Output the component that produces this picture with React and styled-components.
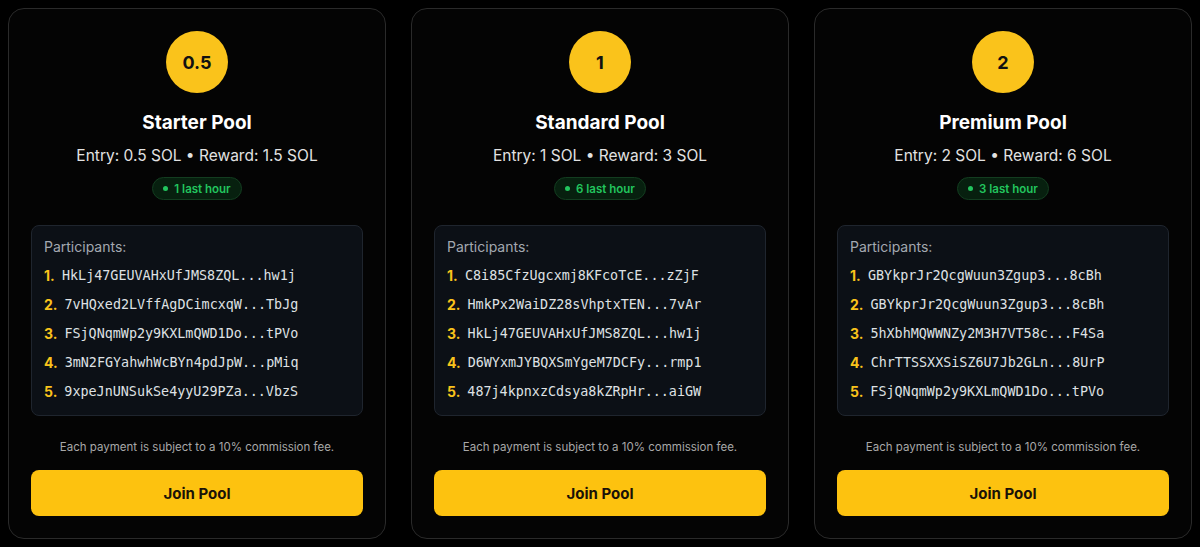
import React from "react";
import styled, { createGlobalStyle } from "styled-components";

const pools = [
  {
    amount: "0.5",
    name: "Starter Pool",
    entry: "0.5",
    reward: "1.5",
    recent: 1,
    participants: [
      "HkLj47GEUVAHxUfJMS8ZQL...hw1j",
      "7vHQxed2LVffAgDCimcxqW...TbJg",
      "FSjQNqmWp2y9KXLmQWD1Do...tPVo",
      "3mN2FGYahwhWcBYn4pdJpW...pMiq",
      "9xpeJnUNSukSe4yyU29PZa...VbzS",
    ],
  },
  {
    amount: "1",
    name: "Standard Pool",
    entry: "1",
    reward: "3",
    recent: 6,
    participants: [
      "C8i85CfzUgcxmj8KFcoTcE...zZjF",
      "HmkPx2WaiDZ28sVhptxTEN...7vAr",
      "HkLj47GEUVAHxUfJMS8ZQL...hw1j",
      "D6WYxmJYBQXSmYgeM7DCFy...rmp1",
      "487j4kpnxzCdsya8kZRpHr...aiGW",
    ],
  },
  {
    amount: "2",
    name: "Premium Pool",
    entry: "2",
    reward: "6",
    recent: 3,
    participants: [
      "GBYkprJr2QcgWuun3Zgup3...8cBh",
      "GBYkprJr2QcgWuun3Zgup3...8cBh",
      "5hXbhMQWWNZy2M3H7VT58c...F4Sa",
      "ChrTTSSXXSiSZ6U7Jb2GLn...8UrP",
      "FSjQNqmWp2y9KXLmQWD1Do...tPVo",
    ],
  },
];

const GlobalStyle = createGlobalStyle`
  body {
    margin: 0;
    background: #000;
    font-family: Inter, "Noto Sans", sans-serif;
    -webkit-font-smoothing: antialiased;
  }
`;

const Grid = styled.div`
  display: grid;
  grid-template-columns: repeat(3, 1fr);
  gap: 25px;
  padding: 8px;
`;

const Card = styled.div`
  display: flex;
  flex-direction: column;
  align-items: center;
  padding: 22px;
  background: #040404;
  border: 1px solid #2a2a2a;
  border-radius: 16px;
`;

const Coin = styled.div`
  width: 62px;
  height: 62px;
  border-radius: 50%;
  background: #fac31b;
  color: #111;
  display: flex;
  align-items: center;
  justify-content: center;
  font-size: 18px;
  font-weight: 700;
`;

const Title = styled.h3`
  margin: 16px 0 0;
  font-size: 19px;
  line-height: 28px;
  font-weight: 700;
  color: #fff;
`;

const Terms = styled.p`
  margin: 7px 0 0;
  font-size: 15.5px;
  line-height: 24px;
  color: #e2e2e2;
`;

const Badge = styled.span`
  margin-top: 9px;
  display: inline-flex;
  align-items: center;
  gap: 6px;
  height: 23px;
  padding: 0 10px;
  border-radius: 999px;
  background: #07200f;
  border: 1px solid #133d20;
  color: #22c55e;
  font-size: 11.5px;
  font-weight: 600;
  box-sizing: border-box;
`;

const Dot = styled.span`
  width: 5px;
  height: 5px;
  border-radius: 50%;
  background: #22c55e;
`;

const List = styled.div`
  align-self: stretch;
  margin-top: 25px;
  padding: 11px 12px 9px;
  background: #0c1016;
  border: 1px solid #1f252e;
  border-radius: 8px;
`;

const ListLabel = styled.div`
  font-size: 14px;
  line-height: 20px;
  color: #a3a8b0;
  margin-bottom: 4px;
`;

const Row = styled.div`
  display: flex;
  align-items: center;
  gap: 7px;
  height: 29px;
`;

const Rank = styled.span`
  font-size: 14px;
  font-weight: 700;
  color: #fac31b;
  min-width: 11px;
`;

const Address = styled.span`
  font-family: "DejaVu Sans Mono", "Liberation Mono", monospace;
  font-size: 13.4px;
  color: #dfe1e4;
`;

const Note = styled.p`
  margin: 23px 0 0;
  font-size: 11.5px;
  line-height: 16px;
  color: #a8a8a8;
`;

const JoinButton = styled.button`
  align-self: stretch;
  margin-top: 15px;
  height: 46px;
  border: none;
  border-radius: 8px;
  background: #fdc20f;
  color: #1a1208;
  font-family: inherit;
  font-size: 15px;
  font-weight: 700;
  cursor: pointer;
`;

export default function App() {
  return (
    <>
      <GlobalStyle />
      <Grid>
        {pools.map((pool) => (
          <Card key={pool.name}>
            <Coin>{pool.amount}</Coin>
            <Title>{pool.name}</Title>
            <Terms>
              Entry: {pool.entry} SOL • Reward: {pool.reward} SOL
            </Terms>
            <Badge>
              <Dot />
              {pool.recent} last hour
            </Badge>
            <List>
              <ListLabel>Participants:</ListLabel>
              {pool.participants.map((p, i) => (
                <Row key={i}>
                  <Rank>{i + 1}.</Rank>
                  <Address>{p}</Address>
                </Row>
              ))}
            </List>
            <Note>Each payment is subject to a 10% commission fee.</Note>
            <JoinButton>Join Pool</JoinButton>
          </Card>
        ))}
      </Grid>
    </>
  );
}
